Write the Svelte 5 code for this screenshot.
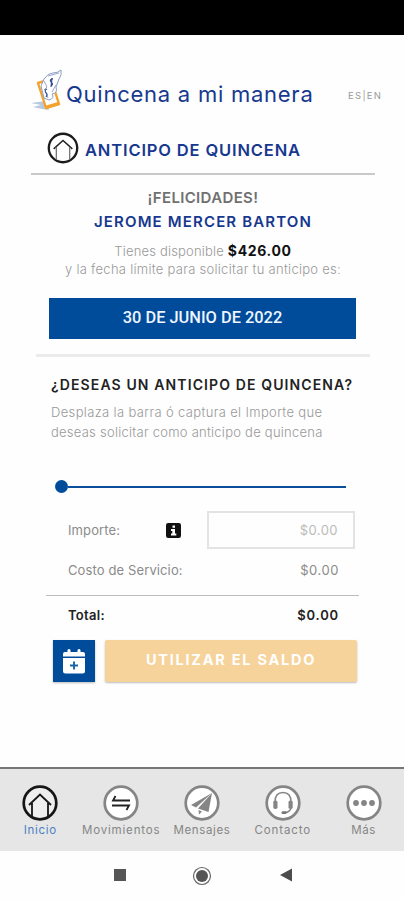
<script lang="ts">
  const available = '$426.00';
  const deadline = '30 DE JUNIO DE 2022';

  let amount = 0;

  $: amountLabel = `$${amount.toFixed(2)}`;

  const tabs = [
    { id: 'home', label: 'Inicio', spacing: 0.7 },
    { id: 'moves', label: 'Movimientos', spacing: 0.82 },
    { id: 'messages', label: 'Mensajes', spacing: 0.65 },
    { id: 'contact', label: 'Contacto', spacing: 0.9 },
    { id: 'more', label: 'Más', spacing: 0.6 }
  ];
</script>

<div class="screen">
  <div class="status-bar"></div>

  <header class="brand">
    <svg class="logo" width="34" height="44" viewBox="0 0 34 44">
      <path d="M1 34 L16 32 L19 41 L12 40 L3 38 L11 36Z" fill="#b8c8e2" />
      <path d="M8 14 L21 10 L29 35 L16 39Z" fill="#fff" stroke="#f3a32b" stroke-width="2.4" stroke-linejoin="round" />
      <path d="M16 36.5 L28 33 L29 36 L17 39.5Z" fill="#f3a32b" />
      <path d="M14 10 Q18 4 23 4 Q28 4 31 1 Q32 6 29 10 L26 18 Q28 24 22 25 Q25 29 19 31 L14 29 L11 17Z" fill="#fff" stroke="#8b9bc4" stroke-width="1" />
      <path d="M18 7 L29 4 M14 12 L17 18 L14 21 M26 16 L22 23 M16 23 L18 29" fill="none" stroke="#8b9bc4" stroke-width=".9" />
      <path d="M23 10 Q19 10 21 13 Q24 15 21 17 M22 9 L21 18 M17 20 Q14 21 16 24 Q18 25 16 28" fill="none" stroke="#324e91" stroke-width="1.2" />
    </svg>
    <span class="brand-name">Quincena a mi manera</span>
    <span class="lang">ES|EN</span>
  </header>

  <div class="page-title">
    <svg width="32" height="32" viewBox="0 0 36 36">
      <circle cx="18" cy="18" r="16" fill="#fff" stroke="#1b1b1b" stroke-width="2.6" />
      <path d="M7.5 19 L18 9.5 L28.5 19" fill="none" stroke="#222" stroke-width="1.6" />
      <path d="M10.5 17 V31 M25.5 17 V31" stroke="#777" stroke-width="1.5" />
    </svg>
    <h1>ANTICIPO DE QUINCENA</h1>
  </div>

  <section class="summary">
    <p class="congrats">¡FELICIDADES!</p>
    <p class="name">JEROME MERCER BARTON</p>
    <p class="available"><span>Tienes disponible</span> <b>{available}</b></p>
    <p class="until">y la fecha límite para solicitar tu anticipo es:</p>
    <div class="deadline">{deadline}</div>
  </section>

  <section class="request">
    <h2>¿DESEAS UN ANTICIPO DE QUINCENA?</h2>
    <p class="first">Desplaza la barra ó captura el Importe que</p>
    <p class="second">deseas solicitar como anticipo de quincena</p>
    <div class="slider">
      <span class="knob"></span>
      <span class="track"></span>
    </div>
  </section>

  <section class="amounts">
    <div class="row amount">
      <span class="label">Importe:</span>
      <svg width="15" height="15" viewBox="0 0 15 15">
        <rect width="15" height="15" rx="2.2" fill="#111" />
        <path d="M6.5 2.5 H9 V4.7 H6.5Z M5 6 H9 V10.5 H10.3 V12.5 H5 V10.5 H6.3 V8 H5Z" fill="#fff" />
      </svg>
      <div class="field">{amountLabel}</div>
    </div>
    <div class="row fee">
      <span class="label">Costo de Servicio:</span>
      <span class="value">$0.00</span>
    </div>
    <div class="row total">
      <span class="label">Total:</span>
      <span class="value">{amountLabel}</span>
    </div>
  </section>

  <div class="actions">
    <button class="calendar" aria-label="Calendario">
      <svg width="22" height="25" viewBox="0 0 22 25">
        <path d="M2 3 H4.5 V1 Q6 -1 7.5 1 V3 H14.5 V1 Q16 -1 17.5 1 V3 H20 Q22 3 22 5 V7.5 H0 V5 Q0 3 2 3Z" fill="#fff" />
        <path d="M0 9 H22 V22 Q22 24.5 19.5 24.5 H2.5 Q0 24.5 0 22Z" fill="#fff" />
        <path d="M11 12.5 V20.5 M7 16.5 H15" stroke="#1766a8" stroke-width="1.9" />
      </svg>
    </button>
    <button class="use">UTILIZAR EL SALDO</button>
  </div>

  <nav>
    {#each tabs as tab}
      <div class="tab" class:active={tab.id === 'home'}>
        <svg width="36" height="36" viewBox="0 0 36 36">
          <circle cx="18" cy="18" r="16.3" fill={tab.id === 'home' ? '#eee' : '#fff'} stroke="currentColor" stroke-width="2.7" />
          {#if tab.id === 'home'}
            <path d="M7 20 L18 9.5 L29 20 M10 18 V31.5 M26 18 V31.5" fill="none" stroke="currentColor" stroke-width="1.8" />
          {:else if tab.id === 'moves'}
            <path d="M27 15.5 H10 L12.5 11 M9 20.5 H26 L23.5 25" fill="none" stroke="#222" stroke-width="1.8" />
          {:else if tab.id === 'messages'}
            <path d="M28 8 L7 20 L12 22.5Z M28 8 L14 23.5 L24.5 27Z M14.5 25 L18 26.5 L15 29.5Z" fill="#858585" />
          {:else if tab.id === 'contact'}
            <path d="M10 17 Q10 7.5 18 7.5 Q26 7.5 26 17 M26 23 Q25 27.5 19 27.7" fill="none" stroke="#858585" stroke-width="1.5" />
            <rect x="8.3" y="15.5" width="4.2" height="8.5" rx="1.8" fill="#858585" />
            <rect x="23.5" y="15.5" width="4.2" height="8.5" rx="1.8" fill="#858585" />
            <rect x="16.5" y="26.3" width="5" height="2.8" rx="1.4" fill="#777" />
          {:else}
            <circle cx="10" cy="18" r="2.9" fill="#858585" />
            <circle cx="18" cy="18" r="2.9" fill="#858585" />
            <circle cx="26" cy="18" r="2.9" fill="#858585" />
          {/if}
        </svg>
        <span style="letter-spacing: {tab.spacing}px">{tab.label}</span>
      </div>
    {/each}
  </nav>

  <div class="system-bar">
    <svg width="180" height="20" viewBox="0 0 180 20">
      <rect x="2" y="3" width="12" height="12" fill="#555" />
      <circle cx="90" cy="10" r="8.5" fill="none" stroke="#666" stroke-width="1.2" />
      <circle cx="90" cy="10" r="6" fill="#555" />
      <path d="M168 9 L180 2.5 V15.5Z" fill="#4c4c4c" />
    </svg>
  </div>
</div>

<style>
  :global(body) {
    background: #fefefe;
  }

  .screen {
    width: 404px;
    height: 900px;
    overflow: hidden;
    font-family: Inter, 'Liberation Sans', sans-serif;
    color: #888;
    white-space: nowrap;
  }

  .screen * {
    box-sizing: border-box;
  }

  p, h1, h2 {
    margin: 0;
  }

  .status-bar {
    height: 35px;
    background: #000;
  }

  .brand {
    display: flex;
    align-items: flex-start;
    height: 89px;
    padding: 24px 0 0 30px;
  }

  .logo {
    margin-top: 10px;
  }

  .brand-name {
    width: 282px;
    margin-left: 2px;
    margin-top: 21px;
    font-size: 22px;
    line-height: 28px;
    letter-spacing: 0.75px;
    color: #17388f;
  }

  .lang {
    margin-top: 31px;
    font-size: 9.5px;
    line-height: 12px;
    letter-spacing: 1.3px;
    color: #999;
  }

  .page-title {
    display: flex;
    align-items: flex-start;
    height: 51px;
    margin: 0 29px 0 31px;
    padding: 8px 0 0 16px;
    border-bottom: 2px solid #c9c9c9;
  }

  h1 {
    margin: 8px 0 0 6px;
    font-size: 16.5px;
    line-height: 20px;
    font-weight: 600;
    letter-spacing: 0.85px;
    color: #17388f;
  }

  .summary {
    height: 182px;
    margin: 0 34px 0 36px;
    padding-top: 11px;
    border-bottom: 3px solid #ebebeb;
    text-align: center;
  }

  .congrats, .name {
    font-size: 15px;
    line-height: 24px;
    font-weight: 600;
  }

  .congrats {
    letter-spacing: 0.35px;
    color: #707070;
  }

  .name {
    letter-spacing: 1.15px;
    color: #17388f;
  }

  .available {
    margin-top: 8px;
    font-size: 13px;
    line-height: 18px;
    font-weight: 300;
    letter-spacing: 0.18px;
    color: #999;
  }

  .available b {
    font-size: 14px;
    font-weight: 700;
    letter-spacing: 0.65px;
    color: #111;
  }

  .until {
    font-size: 13px;
    line-height: 18px;
    font-weight: 300;
    letter-spacing: 0.28px;
    color: #999;
  }

  .deadline {
    height: 41px;
    margin: 20px 14px 0 13px;
    background: #004c9b;
    color: #eef5ff;
    font: 500 16.4px/40px Roboto, sans-serif;
  }

  .request {
    height: 154px;
    padding: 18px 0 0 51px;
  }

  h2 {
    font-size: 14px;
    line-height: 20px;
    font-weight: 600;
    letter-spacing: 1.12px;
    color: #222;
  }

  .request p {
    font-size: 13px;
    line-height: 20px;
    font-weight: 300;
    color: #999;
  }

  .request .first {
    margin-top: 7px;
    letter-spacing: 0.35px;
  }

  .request .second {
    letter-spacing: 0.25px;
  }

  .slider {
    display: flex;
    align-items: center;
    width: 291px;
    margin: 38px 0 0 4px;
  }

  .knob {
    width: 13px;
    height: 13px;
    border-radius: 50%;
    background: #004c9b;
  }

  .track {
    flex: 1;
    height: 2px;
    background: #0b4f9c;
  }

  .row {
    display: flex;
    align-items: center;
    font-size: 13px;
    font-weight: 400;
    letter-spacing: 0.12px;
    color: #8b8b8b;
  }

  .label {
    flex: none;
  }

  .amount {
    height: 38px;
    padding-left: 68px;
  }

  .amount .label {
    width: 98px;
  }

  .field {
    width: 148px;
    height: 38px;
    margin-left: 26px;
    padding-right: 15px;
    border: 2px solid #e3e3e3;
    line-height: 35px;
    letter-spacing: 0.45px;
    text-align: right;
    color: #bbb;
  }

  .fee, .total {
    justify-content: space-between;
    margin: 0 45px 0 46px;
    padding: 0 20px 0 22px;
  }

  .fee {
    height: 47px;
    padding-bottom: 5px;
    border-bottom: 1px solid #bcbcbc;
  }

  .fee .value {
    letter-spacing: 0.55px;
  }

  .total {
    height: 40px;
    padding-bottom: 2px;
    font-weight: 600;
    letter-spacing: 0.3px;
    color: #222;
  }

  .total .value {
    letter-spacing: 0.85px;
  }

  .actions {
    display: flex;
    gap: 10px;
    height: 131px;
    padding: 4px 0 0 53px;
  }

  .actions button {
    height: 42px;
    padding: 0;
    border: 0;
    box-shadow: 0 1px 2px #0004;
  }

  .calendar {
    display: flex;
    align-items: center;
    justify-content: center;
    width: 42px;
    background: #004c9b;
  }

  .actions .use {
    width: 252px;
    padding-bottom: 2px;
    border-radius: 2px;
    background: #f7d39c;
    color: #fff;
    font: 700 14.5px/38px Inter, sans-serif;
    letter-spacing: 1.75px;
  }

  nav {
    display: flex;
    height: 84px;
    padding-top: 16px;
    border-top: 2px solid #767676;
    background: #e6e6e6;
  }

  .tab {
    display: flex;
    flex: 1;
    flex-direction: column;
    align-items: center;
    gap: 1px;
    color: #858585;
    font-size: 11.5px;
    line-height: 16px;
  }

  .tab.active {
    color: #161616;
  }

  .tab.active span {
    color: #4d7fc4;
  }

  .system-bar {
    display: flex;
    justify-content: center;
    padding-top: 15px;
  }
</style>
